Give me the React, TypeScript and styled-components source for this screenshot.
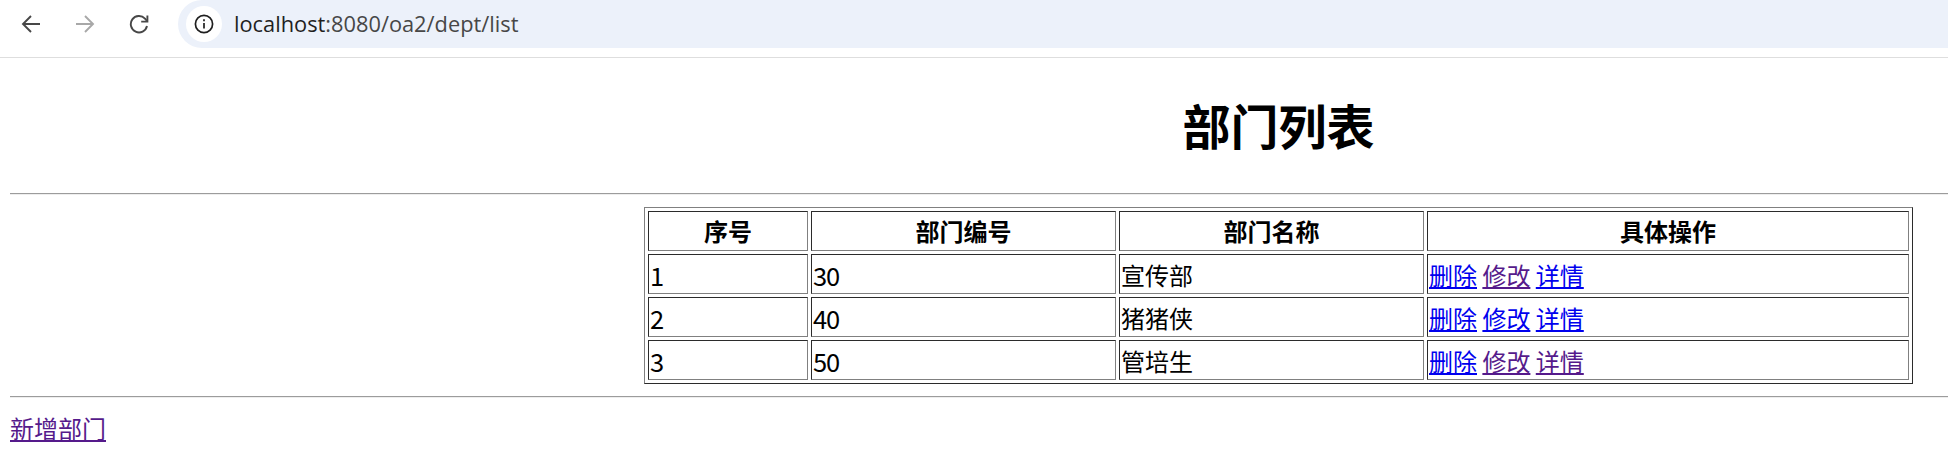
import React from "react";
import styled, { createGlobalStyle } from "styled-components";

const rows = [
  { no: 1, code: 30, name: "宣传部", visited: [false, true, false] },
  { no: 2, code: 40, name: "猪猪侠", visited: [false, false, false] },
  { no: 3, code: 50, name: "管培生", visited: [false, true, true] },
];

const actions = ["删除", "修改", "详情"];

const App: React.FC = () => {
  return (
    <Viewport>
      <GlobalStyle />
      <Toolbar>
        <NavButton>
          <svg width="20" height="20" viewBox="0 0 20 20" fill="none" stroke="#474747" strokeWidth="1.9">
            <path d="M19 10H2M10 2l-8 8 8 8" />
          </svg>
        </NavButton>
        <NavButton>
          <svg width="20" height="20" viewBox="0 0 20 20" fill="none" stroke="#a8a8a8" strokeWidth="1.9">
            <path d="M1 10h17M10 2l8 8-8 8" />
          </svg>
        </NavButton>
        <NavButton>
          <svg width="20" height="20" viewBox="0 0 20 20" fill="none" stroke="#474747" strokeWidth="1.9">
            <path d="M18 12a8.2 8.2 0 1 1-2-7.4L18 7" />
            <path d="M18.4 1.4V7.6H12.2" />
          </svg>
        </NavButton>
        <AddressBar>
          <InfoBadge>
            <svg width="20" height="20" viewBox="0 0 20 20" fill="none" stroke="#1f1f1f" strokeWidth="1.7">
              <circle cx="10" cy="10" r="8.6" />
              <path d="M10 9v5.6M10 5.2v2" />
            </svg>
          </InfoBadge>
          <Url>
            <Host>localhost</Host>:8080/oa2/dept/list
          </Url>
        </AddressBar>
      </Toolbar>
      <Page>
        <Title>部门列表</Title>
        <Rule />
        <DeptTable>
          <colgroup>
            <col width="160" />
            <col width="305" />
            <col width="305" />
            <col width="482" />
          </colgroup>
          <thead>
            <tr>
              <HeadCell>序号</HeadCell>
              <HeadCell>部门编号</HeadCell>
              <HeadCell>部门名称</HeadCell>
              <HeadCell>具体操作</HeadCell>
            </tr>
          </thead>
          <tbody>
            {rows.map((row) => (
              <tr key={row.no}>
                <Cell $numeric>{row.no}</Cell>
                <Cell $numeric>{row.code}</Cell>
                <Cell>{row.name}</Cell>
                <Cell>
                  {actions.map((action, i) => (
                    <React.Fragment key={action}>
                      <PageLink href="#" $visited={row.visited[i]}>
                        {action}
                      </PageLink>
                      {i < actions.length - 1 ? " " : null}
                    </React.Fragment>
                  ))}
                </Cell>
              </tr>
            ))}
          </tbody>
        </DeptTable>
        <Rule />
        <AddLink>
          <PageLink href="#" $visited>
            新增部门
          </PageLink>
        </AddLink>
      </Page>
    </Viewport>
  );
};

export default App;

/**
 *
 * Styles
 *
 */

const GlobalStyle = createGlobalStyle`
  html, body {
    margin: 0;
    padding: 0;
    overflow: hidden;
    background: #fff;
  }
`;

const Viewport = styled.div`
  width: 1948px;
  height: 460px;
  overflow: hidden;
`;

const Toolbar = styled.div`
  display: flex;
  align-items: flex-start;
  height: 57px;
  padding-left: 4px;
  background: #fff;
  border-bottom: 1px solid #dedede;
`;

const NavButton = styled.div`
  width: 54px;
  height: 48px;
  display: flex;
  align-items: center;
  justify-content: center;
`;

const AddressBar = styled.div`
  flex: 1;
  height: 48px;
  margin-left: 12px;
  padding-left: 8px;
  display: flex;
  align-items: center;
  gap: 12px;
  background: #ecf1fa;
  border-radius: 24px 0 0 24px;
`;

const InfoBadge = styled.div`
  width: 36px;
  height: 36px;
  border-radius: 50%;
  background: #fff;
  display: flex;
  align-items: center;
  justify-content: center;
`;

const Url = styled.div`
  padding-bottom: 2px;
  font-family: "Open Sans", sans-serif;
  font-size: 21.8px;
  color: #474747;
`;

const Host = styled.span`
  color: #1f1f1f;
`;

const Page = styled.div`
  width: 2537px;
  padding: 0 10px;
  font-family: "Noto Sans CJK SC", sans-serif;
  font-size: 24px;
  color: #000;
`;

const Title = styled.h1`
  margin: 0;
  padding-top: 31px;
  height: 135px;
  box-sizing: border-box;
  text-align: center;
  font-size: 48px;
  line-height: 70px;
  font-weight: 700;
`;

const Rule = styled.hr`
  margin: 0;
  height: 0;
  border: 0;
  border-top: 1px solid #9c9c9c;
  border-bottom: 1px solid #eeeeee;
`;

const DeptTable = styled.table`
  width: 1269px;
  margin: 12px auto;
  table-layout: fixed;
  border-collapse: separate;
  border-spacing: 3px;
  border: 1px solid;
  border-color: #808080 #2b2b2b #2b2b2b #808080;
`;

const HeadCell = styled.th`
  height: 40px;
  box-sizing: border-box;
  padding: 0 2px;
  border: 1px solid;
  border-color: #2b2b2b #808080 #808080 #2b2b2b;
  text-align: center;
  font-size: 24px;
  line-height: 34px;
  font-weight: 700;
`;

const Cell = styled.td<{ $numeric?: boolean }>`
  height: 40px;
  box-sizing: border-box;
  padding: 2px 2px 0 1px;
  border: 1px solid;
  border-color: #2b2b2b #808080 #808080 #2b2b2b;
  font-size: ${({ $numeric }) => ($numeric ? "25.5px" : "24px")};
  letter-spacing: ${({ $numeric }) => ($numeric ? "-1.2px" : "0")};
  line-height: 34px;
  white-space: nowrap;
`;

const PageLink = styled.a<{ $visited?: boolean }>`
  color: ${({ $visited }) => ($visited ? "#551a8b" : "#0000ee")};
  text-decoration: underline;
`;

const AddLink = styled.div`
  margin-top: 13px;
  line-height: 34px;
`;
